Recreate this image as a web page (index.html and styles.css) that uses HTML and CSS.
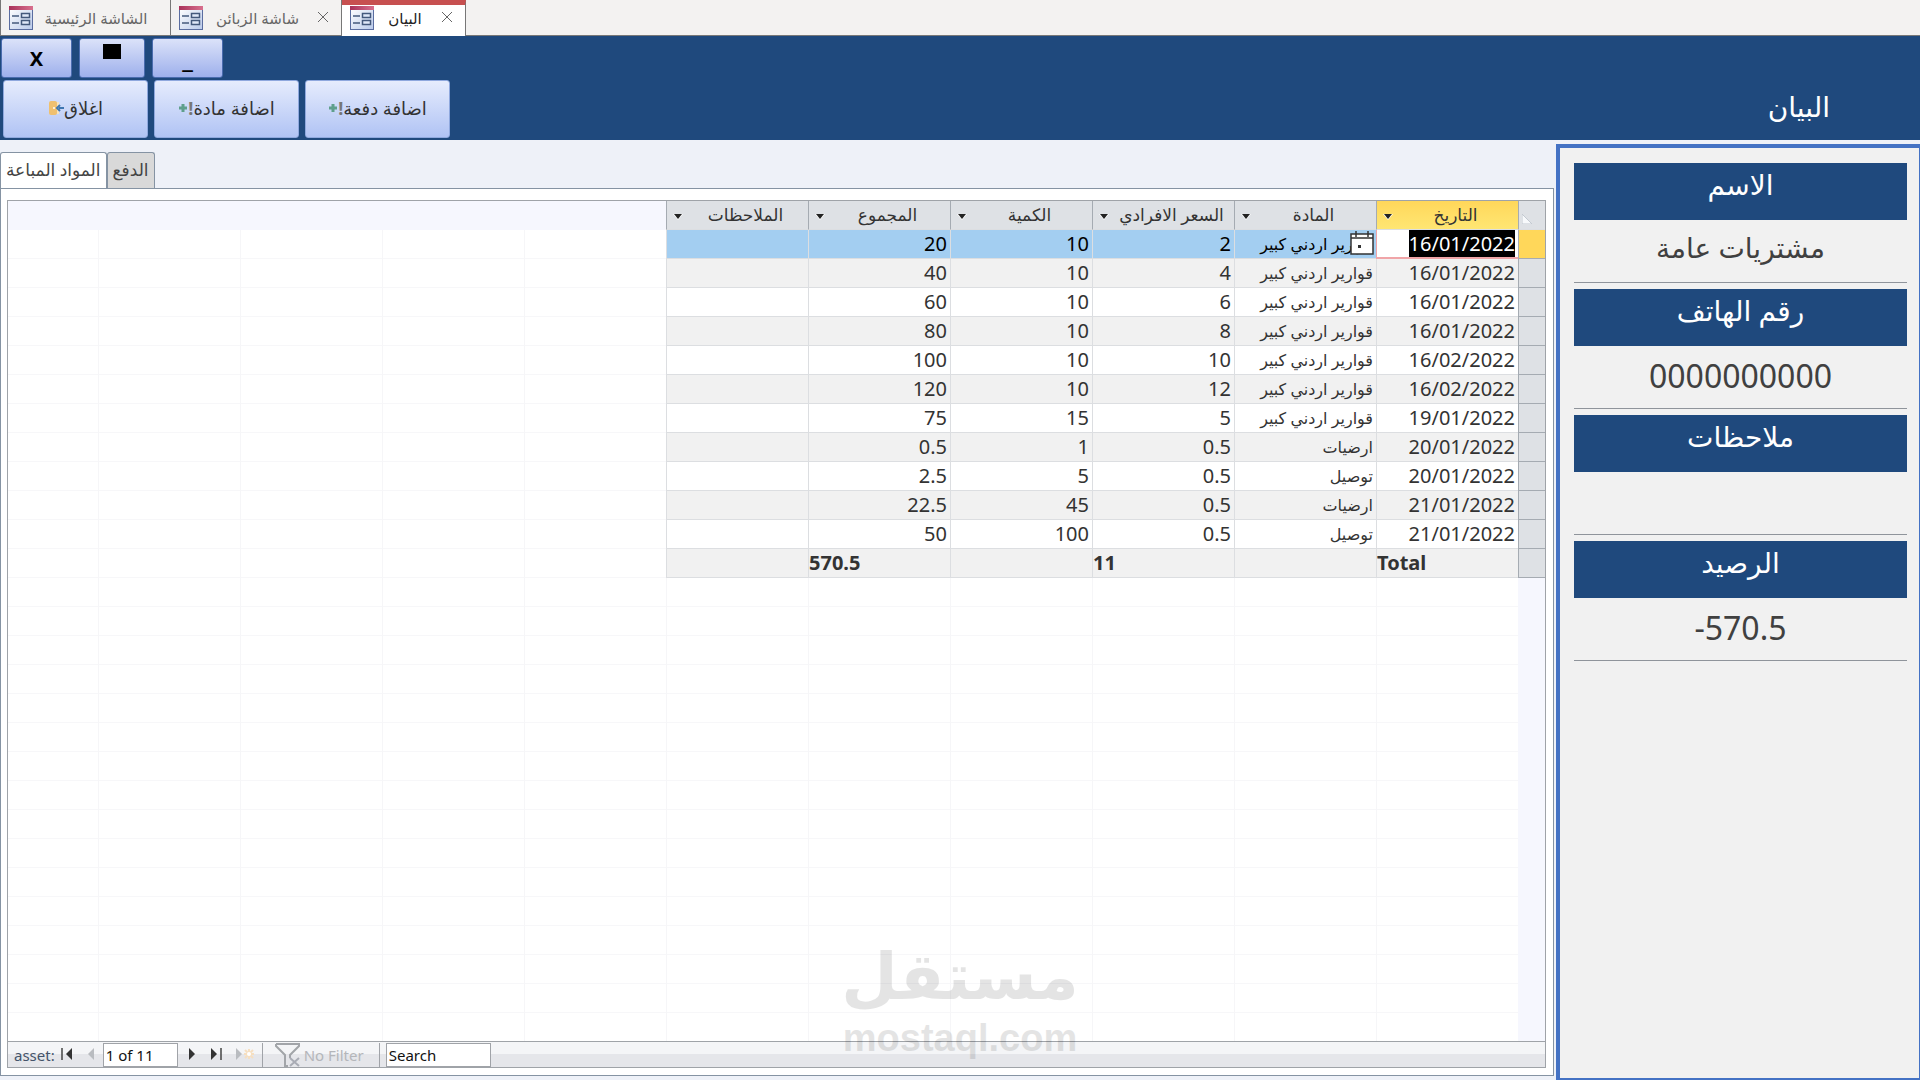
FILE: index.html
```html
<!DOCTYPE html>
<html lang="ar">
<head>
    <meta charset="UTF-8">
    <meta name="viewport" content="width=device-width, initial-scale=1.0">
    <title>البيان</title>
    <link rel="stylesheet" href="styles.css">
</head>
<body>
    <svg class="defs" aria-hidden="true">
        <defs>
            <linearGradient id="form-top" x1="0" x2="1" y1="0" y2="0">
                <stop offset="0" stop-color="#a8325a"/>
                <stop offset="1" stop-color="#d8708e"/>
            </linearGradient>
            <linearGradient id="form-body" x1="0" x2="1" y1="0" y2="1">
                <stop offset="0" stop-color="#ffffff"/>
                <stop offset="1" stop-color="#b9caea"/>
            </linearGradient>
        </defs>
        <symbol id="icon-form" viewBox="0 0 24 24">
            <rect x="0.5" y="2.5" width="23" height="21" fill="url(#form-body)" stroke="#5a6da0"/>
            <rect width="24" height="4" fill="url(#form-top)"/>
            <path d="M3 10h7M3 17h7" stroke="#44597c" stroke-width="1.5"/>
            <rect x="12.5" y="7.5" width="8" height="4" fill="#dfe8f8" stroke="#44597c" stroke-width="1.5"/>
            <rect x="12.5" y="14.5" width="8" height="4" fill="#dfe8f8" stroke="#44597c" stroke-width="1.5"/>
        </symbol>
        <symbol id="icon-close" viewBox="0 0 12 12">
            <path d="M1 1l10 10M11 1L1 11" stroke="#666" fill="none"/>
        </symbol>
        <symbol id="icon-down" viewBox="0 0 10 6">
            <path d="M0 0h10L5 6z" fill="#fff"/>
            <path d="M1 0h8L5 5z" fill="#222"/>
        </symbol>
        <symbol id="icon-plus" viewBox="0 0 10 10">
            <path d="M5 1v8M1 5h8" stroke="#5f9f8c" stroke-width="3"/>
        </symbol>
    </svg>

    <nav class="doc-tabs">
        <a class="doc-tab" href="#main">
            <svg class="form-icon"><use href="#icon-form"/></svg>
            <span>الشاشة الرئيسية</span>
        </a>
        <div class="doc-tab">
            <svg class="form-icon"><use href="#icon-form"/></svg>
            <a href="#customers">شاشة الزبائن</a>
            <button class="close" aria-label="Close"><svg><use href="#icon-close"/></svg></button>
        </div>
        <div class="doc-tab active">
            <svg class="form-icon"><use href="#icon-form"/></svg>
            <a href="#statement">البيان</a>
            <button class="close" aria-label="Close"><svg><use href="#icon-close"/></svg></button>
        </div>
    </nav>

    <header class="form-header">
        <div class="toolbar">
            <div class="window-buttons">
                <button class="win-btn">X</button>
                <button class="win-btn restore" aria-label="Restore"><span class="square"></span></button>
                <button class="win-btn minimize">_</button>
            </div>
            <div class="actions">
                <button class="action" dir="rtl">اغلاق<svg class="door" viewBox="0 0 16 16">
                        <rect x="1" y="1" width="8" height="14" rx="2" fill="#efc06f"/>
                        <path d="M9 2h2v12H9z" fill="#f7e3bd"/>
                        <circle cx="6" cy="8" r="1" fill="#fff"/>
                        <path d="M16 8h-5M12 5L9 8l3 3" stroke="#3f76b0" stroke-width="2" fill="none"/>
                    </svg></button>
                <button class="action" dir="rtl">اضافة مادة<b>!</b><svg class="plus"><use href="#icon-plus"/></svg></button>
                <button class="action" dir="rtl">اضافة دفعة<b>!</b><svg class="plus"><use href="#icon-plus"/></svg></button>
            </div>
        </div>
        <h1>البيان</h1>
    </header>

    <div class="content">
        <main>
            <div class="page-tabs">
                <button class="page-tab selected">المواد المباعة</button>
                <button class="page-tab">الدفع</button>
            </div>
            <div class="panel">
                <div class="datasheet">
                    <div class="grid-area">
                        <table dir="rtl">
                            <thead>
                                <tr>
                                    <th class="selector"><svg class="corner" viewBox="0 0 10 10"><path d="M0 0v10h10z" fill="#f7f9fb" stroke="#c3c9d0"/></svg></th>
                                    <th class="current"><div class="head"><span>التاريخ</span><button aria-label="Sort"><svg><use href="#icon-down"/></svg></button></div></th>
                                    <th><div class="head"><span>المادة</span><button aria-label="Sort"><svg><use href="#icon-down"/></svg></button></div></th>
                                    <th><div class="head"><span>السعر الافرادي</span><button aria-label="Sort"><svg><use href="#icon-down"/></svg></button></div></th>
                                    <th><div class="head"><span>الكمية</span><button aria-label="Sort"><svg><use href="#icon-down"/></svg></button></div></th>
                                    <th><div class="head"><span>المجموع</span><button aria-label="Sort"><svg><use href="#icon-down"/></svg></button></div></th>
                                    <th><div class="head"><span>الملاحظات</span><button aria-label="Sort"><svg><use href="#icon-down"/></svg></button></div></th>
                                </tr>
                            </thead>
                            <tbody>
                                <tr class="selected-row">
                                    <td class="selector"></td>
                                    <td class="editing"><span class="marked">16/01/2022</span>
                                        <button class="calendar" aria-label="Calendar"><svg viewBox="0 0 24 24">
                                            <path d="M1 3h22v20H1z" fill="#fff" stroke="#333" stroke-width="1.5"/>
                                            <path d="M1 7h22M6 0v6M18 0v6" stroke="#333" stroke-width="1.5"/>
                                            <path d="M8 14h3v3H8z" fill="#333"/>
                                        </svg></button></td>
                                    <td class="ar">قوارير اردني كبير</td><td>2</td><td>10</td><td>20</td><td></td>
                                </tr>
                                <tr><td class="selector"></td><td>16/01/2022</td><td class="ar">قوارير اردني كبير</td><td>4</td><td>10</td><td>40</td><td></td></tr>
                                <tr><td class="selector"></td><td>16/01/2022</td><td class="ar">قوارير اردني كبير</td><td>6</td><td>10</td><td>60</td><td></td></tr>
                                <tr><td class="selector"></td><td>16/01/2022</td><td class="ar">قوارير اردني كبير</td><td>8</td><td>10</td><td>80</td><td></td></tr>
                                <tr><td class="selector"></td><td>16/02/2022</td><td class="ar">قوارير اردني كبير</td><td>10</td><td>10</td><td>100</td><td></td></tr>
                                <tr><td class="selector"></td><td>16/02/2022</td><td class="ar">قوارير اردني كبير</td><td>12</td><td>10</td><td>120</td><td></td></tr>
                                <tr><td class="selector"></td><td>19/01/2022</td><td class="ar">قوارير اردني كبير</td><td>5</td><td>15</td><td>75</td><td></td></tr>
                                <tr><td class="selector"></td><td>20/01/2022</td><td class="ar">ارضيات</td><td>0.5</td><td>1</td><td>0.5</td><td></td></tr>
                                <tr><td class="selector"></td><td>20/01/2022</td><td class="ar">توصيل</td><td>0.5</td><td>5</td><td>2.5</td><td></td></tr>
                                <tr><td class="selector"></td><td>21/01/2022</td><td class="ar">ارضيات</td><td>0.5</td><td>45</td><td>22.5</td><td></td></tr>
                                <tr><td class="selector"></td><td>21/01/2022</td><td class="ar">توصيل</td><td>0.5</td><td>100</td><td>50</td><td></td></tr>
                            </tbody>
                            <tfoot>
                                <tr><td class="selector"></td><td>Total</td><td></td><td>11</td><td></td><td>570.5</td><td></td></tr>
                            </tfoot>
                        </table>
                    </div>
                    <div class="record-nav">
                        <label for="record">asset:</label>
                        <button aria-label="First record"><svg viewBox="0 0 12 12"><path d="M1 0v12" stroke="#444" stroke-width="1.5"/><path d="M11 0v12L5 6z" fill="#333"/></svg></button>
                        <button aria-label="Previous record"><svg viewBox="0 0 12 12"><path d="M9 0v12L3 6z" fill="#b9bcc0"/></svg></button>
                        <input type="text" id="record" class="record-box" value="1 of 11">
                        <button aria-label="Next record"><svg viewBox="0 0 12 12"><path d="M3 0v12l6-6z" fill="#333"/></svg></button>
                        <button aria-label="Last record"><svg viewBox="0 0 12 12"><path d="M1 0v12l6-6z" fill="#333"/><path d="M11 0v12" stroke="#444" stroke-width="1.5"/></svg></button>
                        <button class="new-record" aria-label="New record"><svg viewBox="0 0 20 12"><path d="M1 0v12l6-6z" fill="#b9bcc0"/><path d="M14 1v10M9 6h10M10 2l8 8M18 2l-8 8" stroke="#f6dfc0" stroke-width="2"/><circle cx="14" cy="6" r="2" fill="#fff"/></svg></button>
                        <button class="filter"><svg viewBox="0 0 26 24">
                                <path d="M1 1h23v2l-9 9v3M1 1v2l9 9v11h3" fill="none" stroke="#a2a5a9" stroke-width="2"/>
                                <path d="M15 15l9 8M24 15l-9 8" stroke="#a9acb5" stroke-width="2"/>
                            </svg>No Filter</button>
                        <input type="text" class="search-box" aria-label="Search" value="Search">
                    </div>
                    <div class="watermark">
                        <span class="mark-ar">مستقل</span>
                        <span class="mark-en">mostaql.com</span>
                    </div>
                </div>
            </div>
        </main>

        <aside>
            <div class="field">
                <label for="name">الاسم</label>
                <input type="text" id="name" class="ar-value" dir="rtl" value="مشتريات عامة">
            </div>
            <div class="field">
                <label for="phone">رقم الهاتف</label>
                <input type="text" id="phone" value="0000000000">
            </div>
            <div class="field">
                <label for="notes">ملاحظات</label>
                <input type="text" id="notes" value="">
            </div>
            <div class="field">
                <label for="balance">الرصيد</label>
                <input type="text" id="balance" value="-570.5">
            </div>
        </aside>
    </div>
</body>
</html>
```
FILE: styles.css
```css
* {
    box-sizing: border-box;
}

body {
    margin: 0;
    min-height: 100vh;
    display: flex;
    flex-direction: column;
    font-family: "Noto Sans", "DejaVu Sans", sans-serif;
    font-size: 20px;
    color: #333;
    background-color: #eef1f8;
}

button, input {
    font-family: inherit;
    color: inherit;
    margin: 0;
}

a {
    color: inherit;
    text-decoration: none;
}

.defs {
    position: absolute;
    width: 0;
    height: 0;
}

/* document tabs */
.doc-tabs {
    display: flex;
    height: 36px;
    background-color: #f3f2f1;
    border-bottom: 1px solid #777;
}

.doc-tab {
    display: flex;
    align-items: center;
    width: 171px;
    padding: 0 11px 0 8px;
    border-right: 1px solid #777;
    font-size: 15px;
    line-height: 24px;
    color: #666;
}

.doc-tab:first-child {
    border-left: 1px solid #777;
}

.doc-tab span,
.doc-tab a {
    flex: 1;
    padding-right: 4px;
    text-align: center;
    white-space: nowrap;
}

.doc-tab:first-child span {
    padding-right: 0;
}

.doc-tab.active {
    width: 124px;
    height: 36px;
    border-top: 5px solid #c75050;
    padding-bottom: 5px;
    background-color: #fff;
    color: #222;
}

.form-icon {
    width: 24px;
    height: 24px;
}

.close {
    width: 14px;
    height: 24px;
    padding: 0;
    border: none;
    background: none;
}

.close svg {
    width: 12px;
    height: 12px;
}

/* blue form header */
.form-header {
    display: flex;
    justify-content: space-between;
    height: 104px;
    padding: 2px 90px 2px 1px;
    background-color: #1f497d;
}

.form-header h1 {
    align-self: center;
    margin: 36px 0 0;
    font-size: 28px;
    font-weight: normal;
    line-height: 40px;
    color: #fff;
}

.window-buttons {
    display: flex;
    gap: 7px;
    height: 40px;
}

.win-btn {
    width: 71px;
    padding: 0;
    border: 1px solid #4a6cae;
    border-radius: 3px;
    background: linear-gradient(#dbe2f9, #9eb0ec);
    font-size: 20px;
    font-weight: bold;
    color: #000;
}

.win-btn.restore {
    width: 66px;
}

.win-btn.minimize {
    font-size: 26px;
    line-height: 26px;
}

.square {
    display: block;
    width: 18px;
    height: 15px;
    margin: 0 auto 14px;
    background-color: #000;
}

.actions {
    display: flex;
    gap: 6px;
    padding: 2px 2px 0;
}

.action {
    display: flex;
    align-items: center;
    justify-content: center;
    width: 145px;
    height: 58px;
    padding: 0 0 3px;
    border: 1px solid #8fa8de;
    border-radius: 3px;
    background: linear-gradient(#e6ecfd, #b0c3f4);
    font-size: 18px;
    color: #333;
}

.action b {
    color: #777;
}

.plus {
    width: 10px;
    height: 10px;
}

.door {
    width: 16px;
    height: 16px;
}

.content {
    flex: 1;
    display: flex;
    gap: 2px;
}

main {
    flex: 1;
    display: flex;
    flex-direction: column;
    padding: 12px 0 4px;
}

.page-tabs {
    display: flex;
}

.page-tab {
    height: 36px;
    padding: 0 5px 2px;
    border: 1px solid #8593a3;
    border-bottom: none;
    border-radius: 3px 3px 0 0;
    background-color: #d9d9d9;
    font-size: 17px;
    line-height: 32px;
    color: #444;
}

.page-tab.selected {
    height: 37px;
    margin-bottom: -1px;
    background-color: #fff;
}

.panel {
    flex: 1;
    display: flex;
    padding: 11px 7px 7px 6px;
    border: 1px solid #8593a3;
    background-color: #fff;
}

/* datasheet */
.datasheet {
    position: relative;
    flex: 1;
    display: flex;
    flex-direction: column;
    border: 1px solid #9fa3a8;
}

.grid-area {
    flex: 1;
    background:
        linear-gradient(#f6f7fe, #f6f7fe) top / 100% 29px no-repeat,
        repeating-linear-gradient(to left, transparent 0 141px, #f6f6f8 141px 142px) right 27px top / 100% 100% no-repeat,
        linear-gradient(#f6f7fe, #f6f7fe) right / 27px 100% no-repeat,
        repeating-linear-gradient(transparent 0 28px, #f7f7f9 28px 29px),
        #fff;
}

table {
    border-collapse: separate;
    border-spacing: 0;
    table-layout: fixed;
    width: 879px;
    margin-left: auto;
}

th, td {
    height: 29px;
    padding: 0 3px;
    border-left: 1px solid #dcdee1;
    border-bottom: 1px solid #dcdee1;
    line-height: 28px;
    text-align: right;
    font-size: 20px;
    background-color: #fff;
    white-space: nowrap;
}

th {
    width: 142px;
    border-left-color: #a5abb2;
    background-color: #dee1e5;
    font-size: 17px;
    font-weight: normal;
}

th.selector {
    width: 27px;
    padding: 6px 0 0 3px;
    text-align: left;
    line-height: 10px;
}

.corner {
    width: 10px;
    height: 10px;
}

th.current {
    background: linear-gradient(#ffd75a, #ffe673);
}

.head {
    display: flex;
    align-items: center;
}

.head span {
    flex: 1;
    text-align: center;
}

.head button {
    width: 16px;
    padding: 0;
    border: none;
    background: none;
    line-height: 10px;
}

.head svg {
    width: 10px;
    height: 6px;
}

tbody tr:nth-child(even) td,
tfoot td {
    background-color: #f1f1f1;
}

td.ar {
    font-size: 16px;
}

tbody .selected-row td {
    background-color: #a3cef1;
    color: #000;
}

tbody tr td.selector,
tfoot td.selector {
    border-color: #a5abb2;
    background-color: #dee1e5;
}

tbody .selected-row td.selector {
    background-color: #ffd75a;
}

tbody .selected-row td.editing {
    position: relative;
    border-left: 1px solid #f0a5a8;
    border-bottom: 2px solid #f0a5a8;
    line-height: 27px;
    background-color: #fff;
}

.marked {
    display: inline-block;
    background-color: #000;
    color: #fff;
}

.calendar {
    position: absolute;
    top: 1px;
    left: -27px;
    width: 24px;
    height: 24px;
    padding: 0;
    border: none;
    background: none;
    line-height: 0;
}

tfoot td {
    direction: ltr;
    text-align: left;
    font-weight: bold;
    padding-left: 1px;
}

/* record navigation bar */
.record-nav {
    display: flex;
    align-items: center;
    height: 26px;
    padding-left: 6px;
    border-top: 1px solid #9fa3a8;
    background: linear-gradient(#f4f5f7 50%, #e5e6ea 50%);
    font-size: 15px;
    color: #44546a;
}

.record-nav button {
    width: 24px;
    height: 24px;
    padding: 0;
    border: none;
    background: none;
}

.record-nav button svg {
    width: 12px;
    height: 12px;
}

.record-nav input {
    height: 24px;
    padding: 0 2px;
    border: 1px solid #a0a3a8;
    background-color: #fff;
    font-size: 15px;
    color: #111;
}

.record-nav .record-box {
    width: 75px;
    margin-right: 2px;
}

.record-nav .new-record {
    width: 34px;
}

.record-nav .new-record svg {
    width: 20px;
}

.record-nav .filter {
    display: flex;
    align-items: center;
    width: 118px;
    padding-left: 12px;
    border-left: 1px solid #a0a3a8;
    border-right: 1px solid #a0a3a8;
    font-size: 15px;
    color: #b4b6ba;
    white-space: nowrap;
}

.record-nav .filter svg {
    width: 26px;
    height: 24px;
    margin-right: 3px;
}

.record-nav .search-box {
    width: 105px;
    margin-left: 6px;
}

.watermark {
    position: absolute;
    right: 470px;
    bottom: 8px;
    width: 230px;
    display: flex;
    flex-direction: column;
    align-items: center;
    font-weight: bold;
    color: #000;
    opacity: 0.1;
    pointer-events: none;
}

.mark-ar {
    font-family: "DejaVu Sans", sans-serif;
    font-size: 65px;
    line-height: 80px;
}

.mark-en {
    font-family: "Liberation Sans", sans-serif;
    font-size: 38px;
    line-height: 42px;
}

/* customer details */
aside {
    width: 364px;
    margin-top: 4px;
    padding: 15px 12px 0 14px;
    display: flex;
    flex-direction: column;
    gap: 6px;
    border: 4px solid #4472c4;
    border-right-width: 1px;
    border-bottom-width: 2px;
    background-color: #f1f1f1;
}

.field {
    display: flex;
    flex-direction: column;
}

.field label {
    height: 57px;
    background-color: #1f497d;
    font-size: 28px;
    line-height: 42px;
    text-align: center;
    color: #fff;
}

.field input {
    height: 63px;
    width: 100%;
    padding: 0 0 4px;
    border: none;
    border-bottom: 1px solid #8f949b;
    background: none;
    font-size: 32px;
    text-align: center;
    color: #404040;
}

.field .ar-value {
    padding-bottom: 8px;
    font-size: 28px;
}
```
